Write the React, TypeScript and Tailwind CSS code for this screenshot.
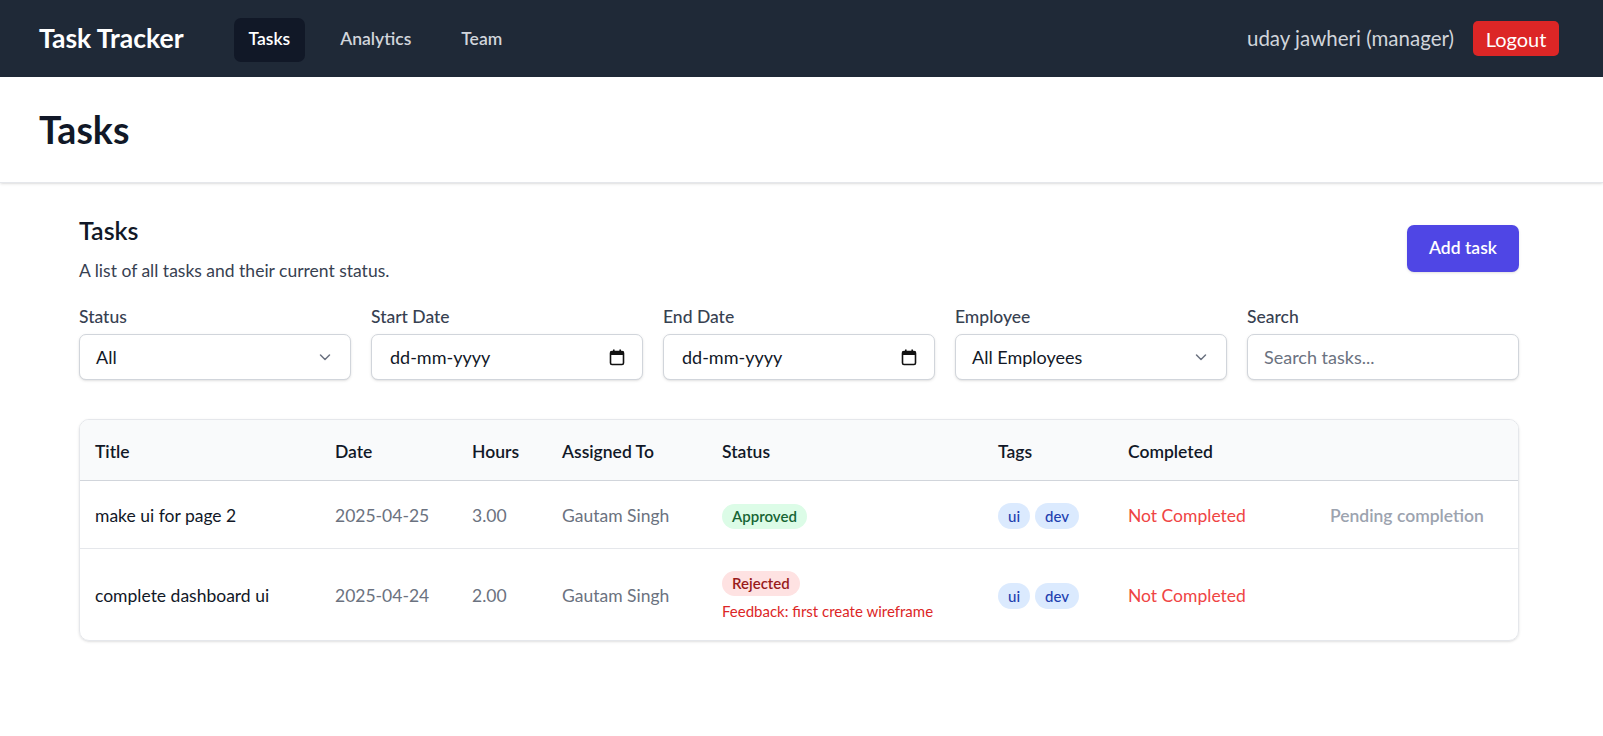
import React from "react";

const font = { fontFamily: "Lato, 'Noto Sans', sans-serif" };

function Chevron() {
  return (
    <svg width="20" height="20" viewBox="0 0 20 20" fill="none" className="text-[#6b7280]">
      <path d="M5.5 8 10 12.5 14.5 8" stroke="currentColor" strokeWidth="1.5" strokeLinecap="round" strokeLinejoin="round" />
    </svg>
  );
}

function CalendarIcon() {
  return (
    <svg width="16" height="17" viewBox="0 0 16 17" fill="none">
      <rect x="1.5" y="2.5" width="13" height="13" rx="1.5" stroke="#111" strokeWidth="1.6" />
      <rect x="1.5" y="2.5" width="13" height="3.5" fill="#111" />
      <rect x="4" y="0.5" width="1.6" height="3" fill="#111" />
      <rect x="10.4" y="0.5" width="1.6" height="3" fill="#111" />
    </svg>
  );
}

function Field({ label, children }: { label: string; children: React.ReactNode }) {
  return (
    <div className="flex flex-col">
      <label className="text-[17.5px] leading-[25px] font-medium text-[#374151]">{label}</label>
      <div className="mt-[5px] h-[46px] rounded-[7px] border border-[#d1d5db] bg-white shadow-sm flex items-center text-[18px] text-[#111827]">
        {children}
      </div>
    </div>
  );
}

const cols = "grid grid-cols-[240px_137px_90px_160px_276px_130px_202px_1fr]";

function Badge({ cls, children }: { cls: string; children: React.ReactNode }) {
  return (
    <span className={`inline-flex items-center h-[25px] rounded-full px-[10px] text-[15px] font-semibold ${cls}`}>
      {children}
    </span>
  );
}

function Tags() {
  return (
    <div className="flex gap-[5px]">
      <span className="inline-flex items-center h-[26px] rounded-full px-[10px] text-[15px] font-medium bg-[#dbeafe] text-[#1e40af]">ui</span>
      <span className="inline-flex items-center h-[26px] rounded-full px-[10px] text-[15px] font-medium bg-[#dbeafe] text-[#1e40af]">dev</span>
    </div>
  );
}

export default function App() {
  return (
    <div className="min-h-screen bg-white" style={font}>
      <nav className="h-[77px] bg-[#1f2937] flex items-center pl-[39px] pr-[44px]">
        <div className="text-[26.5px] font-bold text-white">Task Tracker</div>
        <div className="ml-[50px] flex items-center gap-[20px] pt-[2px]">
          <a className="h-[44px] px-[15px] flex items-center rounded-[7px] bg-[#111827] text-white text-[17.5px] font-semibold">Tasks</a>
          <a className="h-[44px] px-[15px] flex items-center rounded-[7px] text-[#d1d5db] text-[17.5px] font-semibold">Analytics</a>
          <a className="h-[44px] px-[15px] flex items-center rounded-[7px] text-[#d1d5db] text-[17.5px] font-semibold">Team</a>
        </div>
        <div className="ml-auto flex items-center gap-[19px]">
          <span className="text-[20.5px] text-[#d1d5db]">uday jawheri (manager)</span>
          <button className="h-[35px] w-[86px] rounded-[5px] bg-[#dc2626] text-white text-[20px]">Logout</button>
        </div>
      </nav>

      <header className="bg-white border-b border-[#e5e7eb] shadow-sm">
        <div className="px-[39px] py-[30px]">
          <h1 className="text-[37.5px] leading-[45px] font-bold text-[#111827]">Tasks</h1>
        </div>
      </header>

      <main className="pl-[79px] pr-[84px] py-[30px]">
        <div className="flex items-center">
          <div className="flex-1">
            <h2 className="text-[25px] leading-[35px] font-semibold text-[#111827]">Tasks</h2>
            <p className="mt-[10px] text-[17.5px] leading-[25px] text-[#374151]">A list of all tasks and their current status.</p>
          </div>
          <button className="h-[47px] w-[112px] rounded-[7px] bg-[#4f46e5] text-white text-[17.5px] font-semibold shadow-sm">Add task</button>
        </div>

        <div className="mt-[21px] grid grid-cols-5 gap-[20px]">
          <Field label="Status">
            <div className="flex-1 flex items-center justify-between pl-[16px] pr-[15px]">
              <span>All</span>
              <Chevron />
            </div>
          </Field>
          <Field label="Start Date">
            <div className="flex-1 flex items-center justify-between pl-[18px] pr-[17px]">
              <span>dd-mm-yyyy</span>
              <CalendarIcon />
            </div>
          </Field>
          <Field label="End Date">
            <div className="flex-1 flex items-center justify-between pl-[18px] pr-[17px]">
              <span>dd-mm-yyyy</span>
              <CalendarIcon />
            </div>
          </Field>
          <Field label="Employee">
            <div className="flex-1 flex items-center justify-between pl-[16px] pr-[15px]">
              <span>All Employees</span>
              <Chevron />
            </div>
          </Field>
          <Field label="Search">
            <div className="flex-1 flex items-center pl-[16px]">
              <span className="text-[#6b7280]">Search tasks...</span>
            </div>
          </Field>
        </div>

        <div className="mt-[39px] rounded-[10px] border border-[#e5e7eb] shadow overflow-hidden">
          <div className={`${cols} h-[61px] pt-[4px] items-center bg-[#f9fafb] border-b border-[#d1d5db] text-[17.5px] font-semibold text-[#111827]`}>
            <div className="pl-[15px]">Title</div>
            <div className="pl-[15px]">Date</div>
            <div className="pl-[15px]">Hours</div>
            <div className="pl-[15px]">Assigned To</div>
            <div className="pl-[15px]">Status</div>
            <div className="pl-[15px]">Tags</div>
            <div className="pl-[15px]">Completed</div>
            <div></div>
          </div>

          <div className={`${cols} h-[68px] pt-[3px] items-center border-b border-[#e5e7eb] text-[17.5px]`}>
            <div className="pl-[15px] text-[#111827]">make ui for page 2</div>
            <div className="pl-[15px] text-[#6b7280]">2025-04-25</div>
            <div className="pl-[15px] text-[#6b7280]">3.00</div>
            <div className="pl-[15px] text-[#6b7280]">Gautam Singh</div>
            <div className="pl-[15px]">
              <Badge cls="bg-[#dcfce7] text-[#166534]">Approved</Badge>
            </div>
            <div className="pl-[15px]"><Tags /></div>
            <div className="pl-[15px] text-[#ef4444]">Not Completed</div>
            <div className="pl-[15px] text-[#9ca3af] font-semibold">Pending completion</div>
          </div>

          <div className={`${cols} h-[91px] pt-[3px] items-center text-[17.5px]`}>
            <div className="pl-[15px] text-[#111827]">complete dashboard ui</div>
            <div className="pl-[15px] text-[#6b7280]">2025-04-24</div>
            <div className="pl-[15px] text-[#6b7280]">2.00</div>
            <div className="pl-[15px] text-[#6b7280]">Gautam Singh</div>
            <div className="pl-[15px] flex flex-col items-start">
              <Badge cls="bg-[#fee2e2] text-[#991b1b]">Rejected</Badge>
              <span className="mt-[5px] text-[15px] leading-[20px] text-[#dc2626]">Feedback: first create wireframe</span>
            </div>
            <div className="pl-[15px]"><Tags /></div>
            <div className="pl-[15px] text-[#ef4444]">Not Completed</div>
            <div></div>
          </div>
        </div>
      </main>
    </div>
  );
}
